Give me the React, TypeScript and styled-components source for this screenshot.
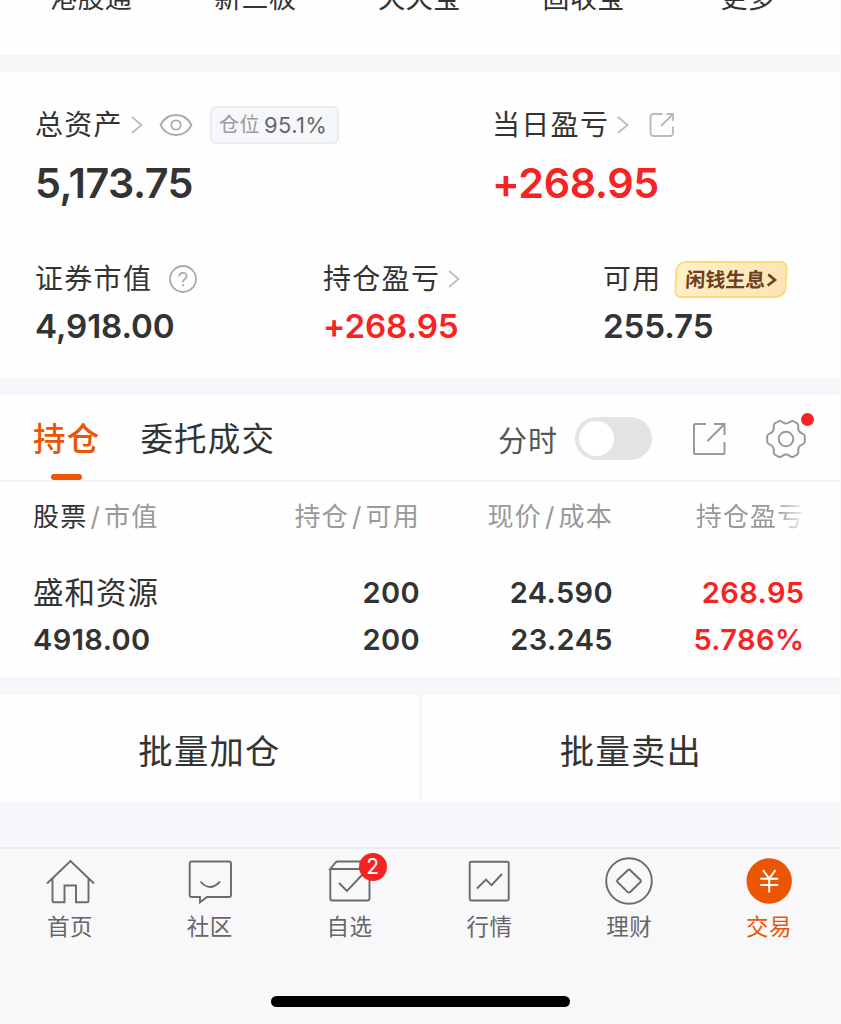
import React from "react";
import styled, { createGlobalStyle } from "styled-components";

const GlobalStyle = createGlobalStyle`
  * { box-sizing: border-box; }
  body {
    margin: 0;
    background: #f6f7fa;
    font-family: Inter, "Noto Sans CJK SC", sans-serif;
    color: #333;
  }
`;

const Page = styled.main`
  width: 841px;
  height: 1024px;
  overflow: hidden;
  display: flex;
  flex-direction: column;
  border-right: 1px solid #f9f9fa;
`;

const Shortcuts = styled.nav`
  height: 55px;
  flex: none;
  background: #fefefe;
  padding-left: 9px;
  display: flex;
  overflow: hidden;
`;

const Shortcut = styled.span`
  width: 164.2px;
  flex: none;
  margin-top: -21px;
  height: 40px;
  line-height: 40px;
  text-align: center;
  font-size: 27px;
  letter-spacing: 0.4px;
`;

const Summary = styled.section`
  height: 306px;
  flex: none;
  margin-top: 17px;
  padding: 33px 35px 0;
  background: #fefefe;
`;

const SummaryRow = styled.div<{ $columns: string; $top?: number }>`
  display: grid;
  grid-template-columns: ${(p) => p.$columns};
  margin-top: ${(p) => p.$top ?? 0}px;
`;

const Label = styled.div`
  height: 40px;
  display: flex;
  align-items: center;
  font-size: 28px;
  line-height: 40px;
  letter-spacing: 1.3px;
  white-space: nowrap;
  svg { flex: none; }
`;

const Amount = styled.div<{ $size: number; $height: number; $up?: boolean; $spacing?: number }>`
  font-size: ${(p) => p.$size}px;
  height: ${(p) => p.$height}px;
  line-height: ${(p) => p.$height}px;
  letter-spacing: ${(p) => p.$spacing ?? 0}px;
  font-weight: 600;
  color: ${(p) => (p.$up ? "#f72323" : "#333")};
  white-space: nowrap;
`;

const Ratio = styled.span`
  margin-left: 17px;
  width: 129px;
  height: 38px;
  border: 2px solid #ebebed;
  border-radius: 6px;
  background: #f6f7fa;
  display: flex;
  align-items: center;
  padding-left: 7px;
  font-size: 20px;
  letter-spacing: 0.5px;
  color: #999;
  b {
    margin-left: 4px;
    font-size: 22px;
    font-weight: 400;
    letter-spacing: 0.4px;
    color: #666;
  }
`;

const Promo = styled.span`
  margin-left: 13px;
  width: 112px;
  height: 37px;
  border: 2px solid #fbdc79;
  border-radius: 10px 7px 10px 7px;
  background: linear-gradient(110deg, #fff0c9, #fde3b4);
  transform: skewX(-3deg);
  display: flex;
  align-items: center;
  justify-content: center;
  gap: 1px;
  font-size: 20px;
  font-weight: 700;
  letter-spacing: 0;
  color: #6a3f22;
`;

const Positions = styled.section`
  height: 282px;
  flex: none;
  margin-top: 17px;
  background: #fefefe;
`;

const Toolbar = styled.div`
  height: 87px;
  border-bottom: 2px solid #f5f5f7;
  padding-left: 33px;
  display: flex;
  align-items: center;
  svg { flex: none; }
`;

const Tab = styled.span<{ $active?: boolean }>`
  position: relative;
  height: 85px;
  line-height: 90px;
  margin-right: 40px;
  font-size: 32.5px;
  letter-spacing: 1.2px;
  font-weight: ${(p) => (p.$active ? 500 : 400)};
  color: ${(p) => (p.$active ? "#eb5503" : "#333")};
  &::after {
    content: "";
    display: ${(p) => (p.$active ? "block" : "none")};
    position: absolute;
    left: 18px;
    bottom: 0;
    width: 31px;
    height: 6px;
    border-radius: 3px;
    background: #eb5503;
  }
`;

const Tools = styled.div`
  flex: 1;
  display: flex;
  align-items: center;
  justify-content: flex-end;
  padding: 2px 34px 0 0;
  font-size: 29px;
  letter-spacing: 1px;
  color: #555;
`;

const Switch = styled.span`
  width: 77px;
  height: 43px;
  margin: 0 40px 0 17px;
  padding: 4px;
  border-radius: 22px;
  background: #e4e4e6;
  &::before {
    content: "";
    display: block;
    width: 35px;
    height: 35px;
    border-radius: 50%;
    background: #fff;
  }
`;

const Settings = styled.span`
  position: relative;
  display: flex;
  margin-left: 40px;
  &::after {
    content: "";
    position: absolute;
    top: -6px;
    right: -8px;
    width: 13px;
    height: 13px;
    border-radius: 50%;
    background: #f72323;
  }
`;

const columns = "180px 207px 193px 191.5px";

const TableHead = styled.div`
  display: grid;
  grid-template-columns: ${columns};
  padding: 15px 0 0 33px;
  height: 88px;
  font-size: 26px;
  line-height: 40px;
  letter-spacing: 1.2px;
  color: #999;
  white-space: nowrap;
`;

const Head = styled.span<{ $right?: boolean; $faded?: boolean }>`
  text-align: ${(p) => (p.$right ? "right" : "left")};
  height: 40px;
  ${(p) =>
    p.$faded &&
    "mask-image: linear-gradient(to right, #000 85%, rgba(0,0,0,0.1) 100%);"}
  em { font-style: normal; color: #333; }
  i { font-style: normal; margin: 0 3px; }
`;

const TableRow = styled.div`
  display: grid;
  grid-template-columns: ${columns};
  grid-auto-rows: 46.5px;
  padding-left: 33px;
  font-size: 29px;
  line-height: 46px;
  white-space: nowrap;
`;

const Cell = styled.span<{ $right?: boolean; $up?: boolean; $name?: boolean }>`
  text-align: ${(p) => (p.$right ? "right" : "left")};
  color: ${(p) => (p.$up ? "#f72323" : "#333")};
  font-weight: ${(p) => (p.$name ? 400 : 600)};
  font-size: ${(p) => (p.$name ? 30.5 : 29)}px;
  letter-spacing: ${(p) => (p.$name ? 1 : 0.4)}px;
`;

const Actions = styled.div`
  height: 107px;
  flex: none;
  margin-top: 18px;
  display: grid;
  grid-template-columns: 419px 418px;
  gap: 3px;
`;

const Action = styled.button`
  border: 0;
  padding: 0;
  background: #fefefe;
  font: inherit;
  font-size: 34.3px;
  letter-spacing: 1.3px;
  color: #333;
`;

const TabBar = styled.nav`
  flex: 1;
  margin-top: 45px;
  border-top: 2px solid #ebebf0;
  background: #f8f8fb;
  display: flex;
  flex-direction: column;
  align-items: center;
`;

const TabItems = styled.div`
  width: 840px;
  padding-right: 1px;
  display: grid;
  grid-template-columns: repeat(6, 1fr);
`;

const TabItem = styled.span<{ $active?: boolean }>`
  padding-top: 8px;
  display: flex;
  flex-direction: column;
  align-items: center;
  font-size: 22.5px;
  line-height: 41px;
  letter-spacing: 0.5px;
  color: ${(p) => (p.$active ? "#eb5503" : "#666")};
`;

const IconBox = styled.span`
  position: relative;
  height: 49px;
  display: flex;
`;

const Badge = styled.span`
  position: absolute;
  left: 34px;
  top: -4px;
  width: 28px;
  height: 28px;
  border-radius: 50%;
  background: #f72323;
  color: #fff;
  font-size: 21px;
  line-height: 28px;
  letter-spacing: 0;
  text-align: center;
`;

const HomeIndicator = styled.div`
  width: 299px;
  height: 11px;
  margin-top: 49px;
  border-radius: 6px;
  background: #000;
`;

const Chevron = ({ gap }: { gap: number }) => (
  <svg width="12" height="18" viewBox="0 0 12 18" fill="none" stroke="#bbb" strokeWidth="1.7" style={{ marginLeft: gap }}>
    <path d="M1 1 10.5 9 1 17" />
  </svg>
);

const Eye = () => (
  <svg width="34" height="24" viewBox="0 0 34 24" fill="none" stroke="#aaa" strokeWidth="1.8" style={{ marginLeft: 16 }}>
    <path d="M1.5 12C5 5 10.5 2 17 2S29 5 32.5 12C29 19 23.5 22 17 22S5 19 1.5 12Z" />
    <circle cx="17" cy="12" r="4.7" />
  </svg>
);

const ShareSmall = () => (
  <svg width="26" height="26" viewBox="0 0 26 26" fill="none" stroke="#bbb" strokeWidth="1.9" style={{ marginLeft: 20 }}>
    <path d="M13.5 2H5Q1.5 2 1.5 5V20.5Q1.5 24 5 24H20.5Q24 24 24 20.5V14.5M12 14 24 2M17.5 2H24V9" />
  </svg>
);

const Help = () => (
  <svg width="28" height="28" viewBox="0 0 28 28" fill="none" stroke="#aaa" strokeWidth="1.8" style={{ marginLeft: 17 }}>
    <circle cx="14" cy="14" r="13" />
    <path d="M10.3 11.5C10.3 6.6 17.7 6.6 17.7 11.2 17.7 13.7 14 14 14 17.3M14 19.2V21.3" />
  </svg>
);

const Share = () => (
  <svg width="34" height="34" viewBox="0 0 34 34" fill="none" stroke="#999" strokeWidth="2">
    <path d="M14 2H3.5Q2 2 2 3.5V30.5Q2 32 3.5 32H31.5Q32.5 32 32.5 31V20M15.5 19 32.5 2M22 2H32.5V13" />
  </svg>
);

const Gear = () => (
  <svg width="40" height="40" viewBox="0 0 40 40" fill="none" stroke="#999" strokeWidth="2" strokeLinejoin="round">
    <path d="M13 2Q15 1.7 16.5 3.3 20 5.7 23.5 3.3 25 1.7 27 2L31.5 4.7Q32.7 6.2 32.2 8.2 32 12.7 36 14.4 38.2 15.2 38.8 17V23Q38.2 24.8 36 25.6 32 27.3 32.2 31.8 32.7 33.8 31.5 35.3L27 38Q25 38.3 23.5 36.7 20 34.3 16.5 36.7 15 38.3 13 38L8.5 35.3Q7.3 33.8 7.8 31.8 8 27.3 4 25.6 1.8 24.8 1.2 23V17Q1.8 15.2 4 14.4 8 12.7 7.8 8.2 7.3 6.2 8.5 4.7Z" />
    <circle cx="20" cy="20" r="7.3" />
  </svg>
);

const PromoArrow = () => (
  <svg width="10" height="14" viewBox="0 0 10 14" fill="none" stroke="#6a3f22" strokeWidth="2.6">
    <path d="M1 1.5 8 7 1 12.5" />
  </svg>
);

const TabIcon = ({ children }: { children: React.ReactNode }) => (
  <svg width="50" height="49" viewBox="0 0 50 49" fill="none" stroke="#6b6b6d" strokeWidth="1.9">
    {children}
  </svg>
);

const tabs = [
  {
    label: "首页",
    icon: <path d="M2 26.5 25.5 4 49 26.5M7.5 22V44Q7.5 45.3 9 45.3H19.5V28.5H31V45.3H42Q43.5 45.3 43.5 44V22" />,
  },
  {
    label: "社区",
    icon: (
      <>
        <path d="M6.5 4.5H44Q46 4.5 46 6.5V38Q46 40 44 40H22L15 45.3V40H6.5Q4.7 40 4.7 38V6.5Q4.7 4.5 6.5 4.5Z" />
        <path d="M15.5 24.5Q25 35.5 35 24.5" />
      </>
    ),
  },
  {
    label: "自选",
    badge: "2",
    icon: (
      <path d="M5.3 12V41.5Q5.3 43.5 7.3 43.5H42.5Q44.5 43.5 44.5 41.5V4.5H13Q11.5 4.5 10.5 5.5L5.3 12H44.500M14 26 22 34 37 18" />
    ),
  },
  {
    label: "行情",
    icon: (
      <>
        <rect x="5.7" y="4.7" width="39" height="38.8" rx="1.5" />
        <path d="M13 31.5 22 22.5 27.5 28.2 38 17" />
      </>
    ),
  },
  {
    label: "理财",
    icon: (
      <>
        <circle cx="25" cy="24" r="22.8" />
        <path d="M23.5 13.5Q25 11.5 26.5 13.5L36.5 23Q37.5 24 36.5 25L26.5 34.8Q25 36.3 23.5 34.8L13.5 25Q12.5 24 13.5 23Z" />
      </>
    ),
  },
  {
    label: "交易",
    active: true,
    icon: (
      <>
        <circle cx="25.2" cy="24" r="22.7" fill="#eb5503" stroke="none" />
        <path stroke="#fff" strokeWidth="2" d="M19 13 25.200 21.500 31.500 13M16.200 21.800H34.200M16.200 28H34.200M25.200 21.500V35.500" />
      </>
    ),
  },
];

export default function App() {
  return (
    <>
      <GlobalStyle />
      <Page>
        <Shortcuts>
          {["港股通", "新三板", "天天宝", "固收宝", "更多"].map((name) => (
            <Shortcut key={name}>{name}</Shortcut>
          ))}
        </Shortcuts>

        <Summary>
          <SummaryRow $columns="457px 1fr">
            <div>
              <Label>
                总资产
                <Chevron gap={8} />
                <Eye />
                <Ratio>仓位<b>95.1%</b></Ratio>
              </Label>
              <Amount $size={41.3} $height={76} $spacing={-0.5}>5,173.75</Amount>
            </div>
            <div>
              <Label>
                当日盈亏
                <Chevron gap={8} />
                <ShareSmall />
              </Label>
              <Amount $size={41.3} $height={76} $spacing={-0.4} $up>+268.95</Amount>
            </div>
          </SummaryRow>
          <SummaryRow $columns="288px 280px 1fr" $top={38}>
            <div>
              <Label>证券市值<Help /></Label>
              <Amount $size={33.2} $height={55} $spacing={-0.1}>4,918.00</Amount>
            </div>
            <div>
              <Label>持仓盈亏<Chevron gap={8} /></Label>
              <Amount $size={33.2} $height={55} $spacing={-0.1} $up>+268.95</Amount>
            </div>
            <div>
              <Label>可用<Promo>闲钱生息<PromoArrow /></Promo></Label>
              <Amount $size={33.2} $height={55} $spacing={-0.1}>255.75</Amount>
            </div>
          </SummaryRow>
        </Summary>

        <Positions>
          <Toolbar>
            <Tab $active>持仓</Tab>
            <Tab>委托成交</Tab>
            <Tools>
              分时
              <Switch />
              <Share />
              <Settings><Gear /></Settings>
            </Tools>
          </Toolbar>
          <TableHead>
            <Head><em>股票</em><i>/</i>市值</Head>
            <Head $right>持仓<i>/</i>可用</Head>
            <Head $right>现价<i>/</i>成本</Head>
            <Head $right $faded>持仓盈亏</Head>
          </TableHead>
          <TableRow>
            <Cell $name>盛和资源</Cell>
            <Cell $right>200</Cell>
            <Cell $right>24.590</Cell>
            <Cell $right $up>268.95</Cell>
            <Cell>4918.00</Cell>
            <Cell $right>200</Cell>
            <Cell $right>23.245</Cell>
            <Cell $right $up>5.786%</Cell>
          </TableRow>
        </Positions>

        <Actions>
          <Action>批量加仓</Action>
          <Action>批量卖出</Action>
        </Actions>

        <TabBar>
          <TabItems>
            {tabs.map((tab) => (
              <TabItem key={tab.label} $active={tab.active}>
                <IconBox>
                  <TabIcon>{tab.icon}</TabIcon>
                  {tab.badge && <Badge>{tab.badge}</Badge>}
                </IconBox>
                {tab.label}
              </TabItem>
            ))}
          </TabItems>
          <HomeIndicator />
        </TabBar>
      </Page>
    </>
  );
}
